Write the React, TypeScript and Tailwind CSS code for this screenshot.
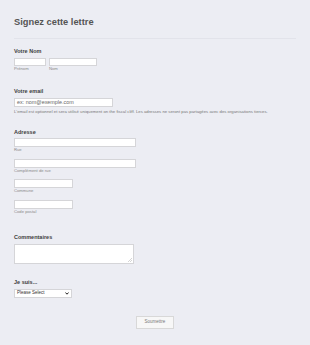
function Sub({ children }: { children: React.ReactNode }) {
  return <div className="h-[5px] text-[4.2px] leading-[5px] text-[#8a8a8a]">{children}</div>;
}

function Label({ children, className = "" }: { children: React.ReactNode; className?: string }) {
  return (
    <div className={`h-[7px] text-[5.5px] font-bold leading-[7px] text-[#3d3d3d] ${className}`}>
      {children}
    </div>
  );
}

const input = "block border border-[#d5d5d8] bg-white";

export default function App() {
  return (
    <div
      className="min-h-[345px] w-full bg-[#ecedf3] px-[14px] pt-[16px]"
      style={{ fontFamily: '"Liberation Sans", Arial, sans-serif' }}
    >
      <h1 className="h-[13px] text-[9.3px] font-bold leading-[13px] text-[#555]">Signez cette lettre</h1>
      <div className="mt-[9px] border-t border-[#e2e3ea]" />

      <Label className="mt-[9px]">Votre Nom</Label>
      <div className="mt-[3px] flex gap-[3px]">
        <div>
          <div className={`${input} h-[8px] w-[32px]`} />
          <Sub>Prénom</Sub>
        </div>
        <div>
          <div className={`${input} h-[8px] w-[48px]`} />
          <Sub>Nom</Sub>
        </div>
      </div>

      <Label className="mt-[17px]">Votre email</Label>
      <div className={`${input} mt-[3px] flex h-[9px] w-[99px] items-center px-[2px] text-[5.4px] text-[#666]`}>
        ex: nom@exemple.com
      </div>
      <div className="mt-[1.5px] h-[5px] text-[4.25px] leading-[5px] whitespace-nowrap text-[#777]">
        L'email est optionnel et sera utilisé uniquement on the fiscal cliff. Les adresses ne seront pas partagées avec des organisations tierces.
      </div>

      <Label className="mt-[15px]">Adresse</Label>
      <div className="mt-[2.5px]">
        <div className={`${input} h-[9px] w-[122px]`} />
        <Sub>Rue</Sub>
      </div>
      <div className="mt-[6.5px]">
        <div className={`${input} h-[9px] w-[122px]`} />
        <Sub>Complément de rue</Sub>
      </div>
      <div className="mt-[6.5px]">
        <div className={`${input} h-[9px] w-[59px]`} />
        <Sub>Commune</Sub>
      </div>
      <div className="mt-[6.5px]">
        <div className={`${input} h-[9px] w-[59px]`} />
        <Sub>Code postal</Sub>
      </div>

      <Label className="mt-[20px]">Commentaires</Label>
      <div className={`${input} relative mt-[3px] h-[20px] w-[120px]`}>
        <svg className="absolute bottom-[1px] right-[1px]" width="4" height="4" viewBox="0 0 4 4">
          <path d="M4 0L0 4M4 2L2 4" stroke="#aaa" strokeWidth="0.5" />
        </svg>
      </div>

      <Label className="mt-[15px]">Je suis...</Label>
      <div className={`${input} mt-[3px] flex h-[9px] w-[58px] items-center justify-between px-[2px] text-[4.5px] text-[#333]`}>
        <span>Please Select</span>
        <svg width="4" height="3" viewBox="0 0 4 3">
          <path d="M0.4 0.5L2 2.2L3.6 0.5" stroke="#222" strokeWidth="1" fill="none" />
        </svg>
      </div>

      <div className="mt-[18.5px] flex justify-center pb-[15px]">
        <button className="flex h-[13px] w-[38px] items-center justify-center border border-[#d8d8d8] bg-[#f7f7f7] text-[4.5px] text-[#777]">
          Soumettre
        </button>
      </div>
    </div>
  );
}
